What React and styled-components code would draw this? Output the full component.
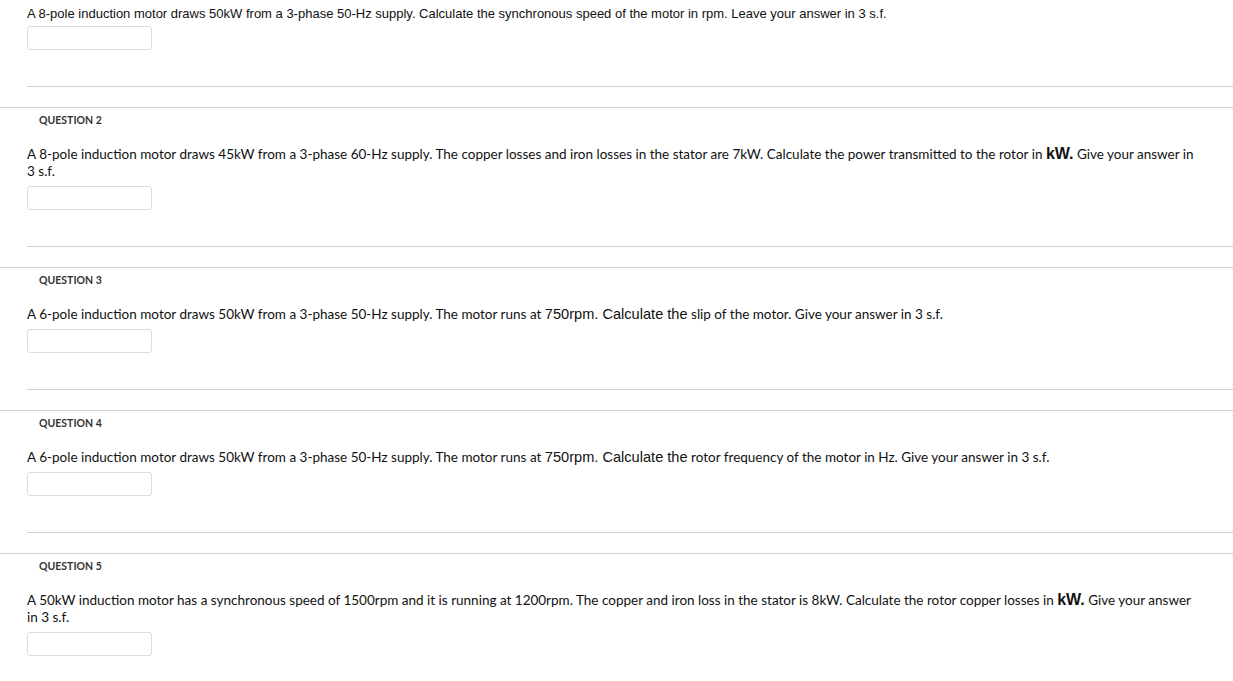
import React from "react";
import styled, { createGlobalStyle } from "styled-components";

const GlobalStyle = createGlobalStyle`
  body {
    margin: 0;
    background: #fff;
    color: #111;
    font-family: Lato, "Open Sans", sans-serif;
  }
`;

const questions = [
  {
    n: 2,
    body: (
      <>
        A 8-pole induction motor draws 45kW from a 3-phase 60-Hz supply. The copper losses and iron losses in the stator are 7kW. Calculate the power transmitted to the rotor in <Big bold>kW.</Big> Give your answer in 3 s.f.
      </>
    ),
  },
  {
    n: 3,
    body: (
      <>
        A 6-pole induction motor draws 50kW from a 3-phase 50-Hz supply. The motor runs at <Big>750rpm. Calculate the</Big> slip of the motor. Give your answer in 3 s.f.
      </>
    ),
  },
  {
    n: 4,
    body: (
      <>
        A 6-pole induction motor draws 50kW from a 3-phase 50-Hz supply. The motor runs at <Big>750rpm. Calculate the</Big> rotor frequency of the motor in Hz. Give your answer in 3 s.f.
      </>
    ),
  },
  {
    n: 5,
    body: (
      <>
        A 50kW induction motor has a synchronous speed of 1500rpm and it is running at 1200rpm. The copper and iron loss in the stator is 8kW. Calculate the rotor copper losses in <Big bold>kW.</Big> Give your answer in 3 s.f.
      </>
    ),
    last: true,
  },
];

function Big({ bold, children }) {
  return <BigText $bold={bold}>{children}</BigText>;
}

export default function App() {
  return (
    <Page>
      <GlobalStyle />
      <FirstItem>
        <ArialText>
          A 8-pole induction motor draws 50kW from a 3-phase 50-Hz supply. Calculate the synchronous speed of the motor in rpm. Leave your answer in 3 s.f.
        </ArialText>
        <Answer type="text" $gap={4} />
        <Separator />
      </FirstItem>
      {questions.map((q) => (
        <Question key={q.n}>
          <Rule />
          <Heading>QUESTION {q.n}</Heading>
          <Body>{q.body}</Body>
          <Answer type="text" $gap={6} />
          {!q.last && <Separator />}
        </Question>
      ))}
    </Page>
  );
}

const Page = styled.div`
  display: flex;
  flex-direction: column;
  width: 1233px;
  padding-bottom: 40px;
`;

const FirstItem = styled.div`
  display: flex;
  flex-direction: column;
  padding-top: 6px;
`;

const Question = styled.div`
  display: flex;
  flex-direction: column;
  padding-top: 20px;
`;

const ArialText = styled.div`
  margin-left: 27px;
  font-family: "Liberation Sans", Arial, sans-serif;
  font-size: 13px;
  line-height: 16px;
  color: #111;
`;

const Body = styled.div`
  margin: 20px 36px 0 27px;
  font-size: 13.5px;
  line-height: 17px;
  color: #111;
`;

const BigText = styled.span`
  font-family: "Liberation Sans", Arial, sans-serif;
  font-size: ${(p) => (p.$bold ? "16px" : "14.6px")};
  font-weight: ${(p) => (p.$bold ? 700 : 400)};
  line-height: 12px;
`;

const Heading = styled.div`
  margin: 6px 0 0 39px;
  font-size: 10.5px;
  font-weight: 700;
  color: #333;
  line-height: 12px;
`;

const Answer = styled.input`
  box-sizing: border-box;
  width: 125px;
  height: 24px;
  margin: ${(p) => p.$gap}px 0 0 27px;
  border: 1px solid #dcdcdc;
  border-radius: 3px;
  background: #fff;
`;

const Separator = styled.div`
  height: 1px;
  margin: 36px 0 0 27px;
  background: #d0d0d0;
`;

const Rule = styled.div`
  height: 1px;
  background: #d0d0d0;
`;
